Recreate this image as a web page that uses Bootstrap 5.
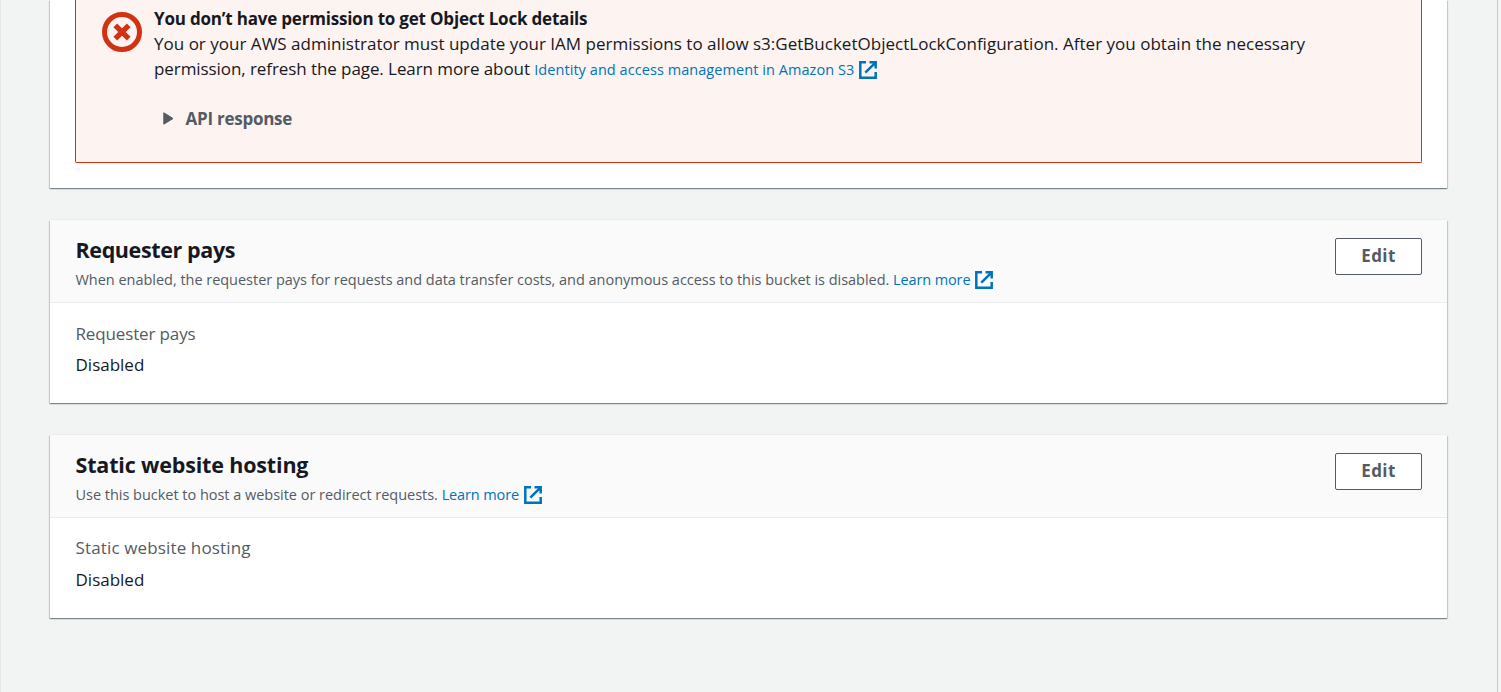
<!DOCTYPE html>
<html lang="en">
<head>
<meta charset="utf-8">
<meta name="viewport" content="width=device-width, initial-scale=1">
<title>Bucket properties</title>
<link rel="stylesheet" href="https://cdn.jsdelivr.net/npm/bootstrap@5.3.0/dist/css/bootstrap.min.css">
<style>
body{font-family:"Open Sans","Noto Sans",sans-serif;font-size:17px;line-height:25px;color:#16191f;background:#f2f3f3;overflow:hidden}
.page-shell{height:692px;margin-right:3px;padding:0 50px 0 49px;border-left:1px solid #e6e8e8;border-right:1px solid #c6cacd}
.panel{--bs-card-border-width:0;--bs-card-border-radius:0;--bs-card-inner-border-radius:0;--bs-card-color:#16191f;box-shadow:0 1px 1px 0 rgba(0,28,36,.3),1px 1px 1px 0 rgba(0,28,36,.15),-1px 1px 1px 0 rgba(0,28,36,.15),0 -1px 0 0 #eaeded}
.panel + .panel{margin-top:32px}
.panel-lock{height:188px;padding:0 25px 25px}
.panel-setting{height:183px}
.panel-head{height:83px;padding:16px 25px 0;background:#fafafa;border-bottom:1px solid #eaeded}
.panel-content{padding:18px 25.5px 0}
.panel-title{font-size:21.5px;line-height:28px;font-weight:700;letter-spacing:-.17px;margin-left:.5px}
.title-tight{letter-spacing:-.38px}
.panel-note{font-size:14.5px;line-height:22px;color:#545b64;margin:5px 0 0 .5px;letter-spacing:-.025px}
.field-label{color:#545b64;letter-spacing:-.14px}
.field-value{margin-top:6px}
.label-wide{letter-spacing:.14px;margin-top:-1px}
.label-wide + .field-value{margin-top:7px}
.error-box{height:163px;margin:0;padding:6px 25px 0;color:#16191f;background:#fdf3f1;border:1px solid #d13212;border-top:0;border-radius:0 0 2px 2px}
.error-title{font-weight:700;letter-spacing:-.2px}
.error-icon{width:40px;height:40px;margin:6px 12px 0 1px}
.error-text{letter-spacing:.014px}
.error-more{letter-spacing:-.08px}
.ext-link{font-size:14.5px;color:#0073bb;text-decoration:none;white-space:nowrap;letter-spacing:.06px}
.panel-note .ext-link{letter-spacing:-.12px}
.ext-icon{width:20px;height:20px;margin-left:4px;vertical-align:-5px}
.api-toggle{margin-top:24px;padding-left:9px;color:#545b64;font-weight:700;letter-spacing:-.25px}
.api-toggle svg{margin-right:11.5px}
.btn-edit{--bs-btn-color:#545b64;--bs-btn-bg:#fff;--bs-btn-border-color:#545b64;--bs-btn-border-radius:2px;--bs-btn-padding-y:0;--bs-btn-padding-x:0;--bs-btn-font-size:17px;--bs-btn-font-weight:700;width:87px;height:37px;margin-top:2px;padding-bottom:1px;line-height:32px;letter-spacing:.4px}
</style>
</head>
<body>
<svg class="d-none" xmlns="http://www.w3.org/2000/svg">
  <symbol id="external" viewBox="0 0 20 20"><path d="M8 2.3H2.3V17.7H17.7V12M11.5 2.3H17.7V8.5M17.2 2.8 7.3 12.7" fill="none" stroke="#0073bb" stroke-width="2.5"/></symbol>
</svg>
<main class="page-shell d-flex flex-column">
  <section class="card panel panel-lock">
    <div class="alert error-box d-flex align-items-start" role="alert">
      <svg class="error-icon flex-shrink-0" viewBox="0 0 40 40" fill="none" stroke="#d13212"><circle cx="20" cy="20" r="17.5" stroke-width="5"/><path d="M13.3 13.3 26.7 26.7M26.7 13.3 13.3 26.7" stroke-width="5.2"/></svg>
      <div class="flex-grow-1 text-nowrap">
        <div class="error-title">You don’t have permission to get Object Lock details</div>
        <div class="error-text">You or your AWS administrator must update your IAM permissions to allow s3:GetBucketObjectLockConfiguration. After you obtain the necessary</div>
        <div><span class="error-more">permission, refresh the page. Learn more about </span><a class="ext-link" href="#">Identity and access management in Amazon S3<svg class="ext-icon"><use href="#external"/></svg></a></div>
        <div class="api-toggle d-flex align-items-center"><svg width="11" height="13" viewBox="0 0 11 13"><path d="M.8.8 10 6.5.8 12.2Z" fill="#545b64" stroke="#545b64" stroke-linejoin="round"/></svg>API response</div>
      </div>
    </div>
  </section>
  <section class="card panel panel-setting">
    <div class="panel-head d-flex justify-content-between align-items-start">
      <div>
        <h2 class="panel-title title-tight mb-0">Requester pays</h2>
        <p class="panel-note">When enabled, the requester pays for requests and data transfer costs, and anonymous access to this bucket is disabled. <a class="ext-link" href="#">Learn more<svg class="ext-icon"><use href="#external"/></svg></a></p>
      </div>
      <button class="btn btn-edit" type="button">Edit</button>
    </div>
    <div class="panel-content">
      <div class="field-label">Requester pays</div>
      <div class="field-value">Disabled</div>
    </div>
  </section>
  <section class="card panel panel-setting">
    <div class="panel-head d-flex justify-content-between align-items-start">
      <div>
        <h2 class="panel-title mb-0">Static website hosting</h2>
        <p class="panel-note">Use this bucket to host a website or redirect requests. <a class="ext-link" href="#">Learn more<svg class="ext-icon"><use href="#external"/></svg></a></p>
      </div>
      <button class="btn btn-edit" type="button">Edit</button>
    </div>
    <div class="panel-content">
      <div class="field-label label-wide">Static website hosting</div>
      <div class="field-value">Disabled</div>
    </div>
  </section>
</main>
<script src="https://cdn.jsdelivr.net/npm/bootstrap@5.3.0/dist/js/bootstrap.bundle.min.js"></script>
</body>
</html>
